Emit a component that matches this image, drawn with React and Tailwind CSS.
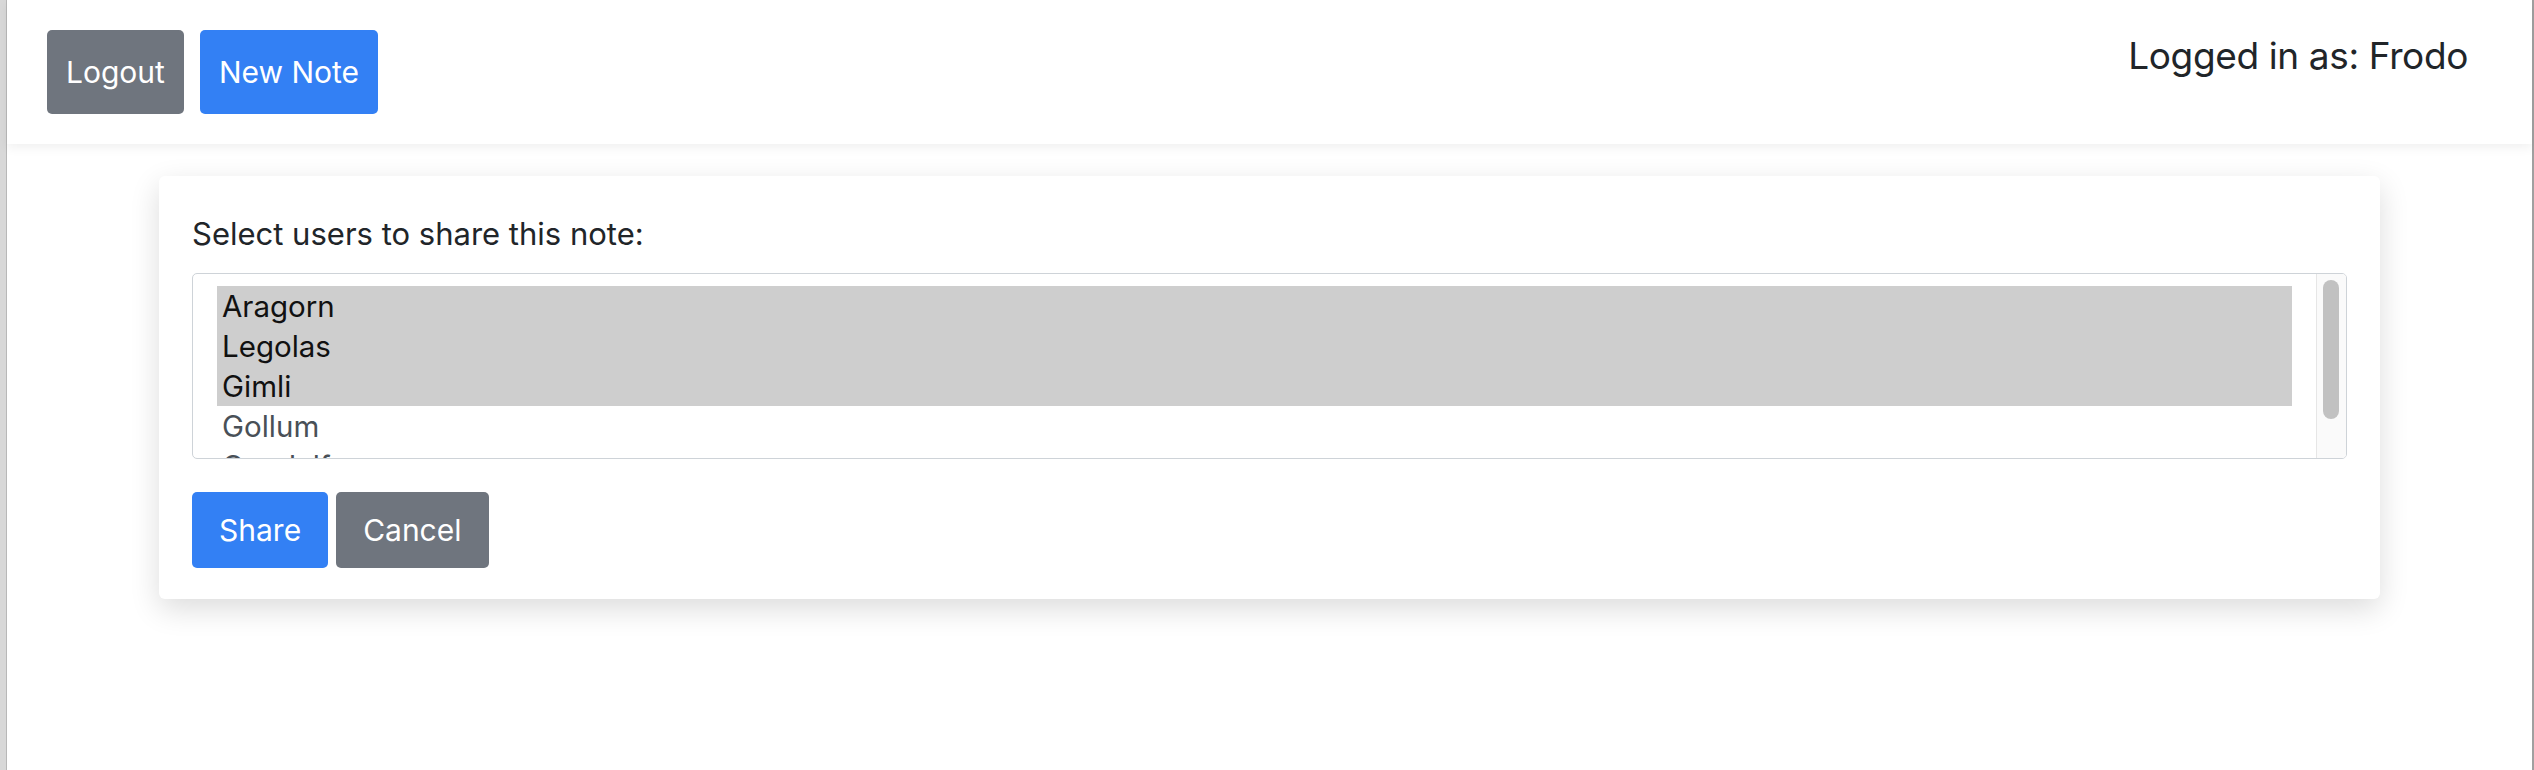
import React from 'react';

const users = [
  { name: 'Aragorn', selected: true },
  { name: 'Legolas', selected: true },
  { name: 'Gimli', selected: true },
  { name: 'Gollum', selected: false },
  { name: 'Gandalf', selected: false },
];

function Header() {
  return (
    <header className="relative z-10 flex h-[144px] items-start justify-between bg-white pl-[40px] pr-[64px] pt-[30px] shadow-[0_4px_10px_rgba(0,0,0,0.06)]">
      <div className="flex gap-[16px]">
        <button className="flex h-[84px] items-center rounded-[5px] bg-[#6f757e] px-[19px] text-[30px] text-white">
          Logout
        </button>
        <button className="flex h-[84px] items-center rounded-[5px] bg-[#3380f4] px-[19px] text-[30px] text-white">
          New Note
        </button>
      </div>
      <div className="mt-[4px] text-[37px] leading-[1.2] tracking-[-0.01em] text-[#212529]">Logged in as: Frodo</div>
    </header>
  );
}

function UserList() {
  return (
    <div className="flex h-[186px] overflow-hidden rounded-[5px] border border-[#ced3d8] bg-white">
      <div className="flex-1 overflow-hidden pl-[24px] pr-[24px] pt-[12px]">
        {users.map((u) => (
          <div
            key={u.name}
            className={`h-[40px] pl-[5px] text-[29.5px] leading-[40px] ${
              u.selected ? 'bg-[#cecece] text-[#111]' : 'text-[#495057]'
            }`}
          >
            {u.name}
          </div>
        ))}
      </div>
      <div className="w-[30px] border-l border-[#e6e6e6] bg-[#fafafa] pl-[6px] pt-[6px]">
        <div className="h-[139px] w-[16px] rounded-full bg-[#c1c1c1]" />
      </div>
    </div>
  );
}

export default function App() {
  return (
    <div className="flex h-[770px] bg-white font-['Inter',sans-serif]">
      <div className="w-[7px] border-r border-[#b8b8b8] bg-[#d8d8d8]" />
      <main className="flex-1">
        <Header />
        <div className="px-[152px] pt-[32px]">
          <div className="rounded-[6px] bg-white px-[33px] pb-[31px] pt-[35px] shadow-[0_10px_30px_rgba(0,0,0,0.14)]">
            <div className="mb-[15.5px] text-[31px] leading-[1.5] text-[#212529]">Select users to share this note:</div>
            <UserList />
            <div className="mt-[33px] flex gap-[8px]">
              <button className="h-[76px] rounded-[5px] bg-[#3380f4] px-[27px] text-[30px] text-white">Share</button>
              <button className="h-[76px] rounded-[5px] bg-[#6f757e] px-[27px] text-[30px] text-white">Cancel</button>
            </div>
          </div>
        </div>
      </main>
      <div className="w-[2px] bg-[#a0a0a0]" />
    </div>
  );
}
